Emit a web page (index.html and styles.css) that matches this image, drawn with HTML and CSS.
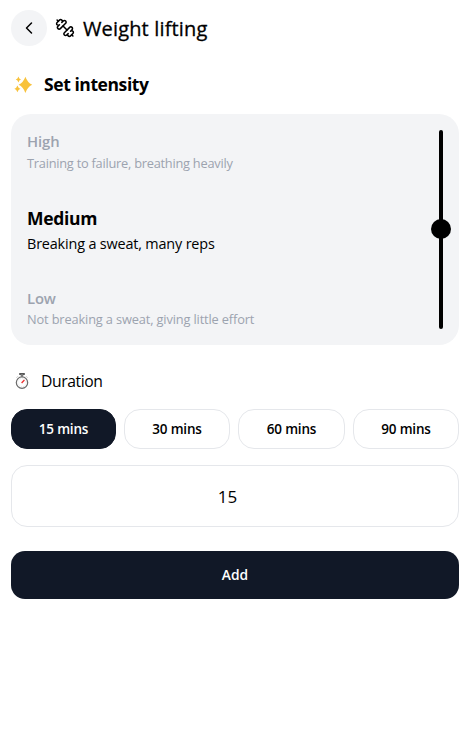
FILE: index.html
```html
<!DOCTYPE html>
<html lang="en">
<head>
<meta charset="utf-8">
<title>Weight lifting</title>
<link rel="stylesheet" href="styles.css">
</head>
<body>
<main class="page">
  <header class="header">
    <button class="back" aria-label="Back">
      <svg width="20" height="20" viewBox="0 0 24 24" fill="none" stroke="currentColor" stroke-width="1.8" stroke-linecap="round" stroke-linejoin="round"><path d="m15 18-6-6 6-6"/></svg>
    </button>
    <svg class="dumbbell" width="20" height="20" viewBox="0 0 24 24" fill="none" stroke="currentColor" stroke-width="1.8" stroke-linecap="round" stroke-linejoin="round"><path d="M14.4 14.4 9.6 9.6"/><path d="M18.657 21.485a2 2 0 1 1-2.829-2.828l-1.767 1.768a2 2 0 1 1-2.829-2.829l6.364-6.364a2 2 0 1 1 2.829 2.829l-1.768 1.767a2 2 0 1 1 2.828 2.829z"/><path d="m21.5 21.5-1.4-1.4"/><path d="M3.9 3.9 2.5 2.5"/><path d="M6.404 12.768a2 2 0 1 1-2.829-2.829l1.768-1.767a2 2 0 1 1-2.828-2.829l2.828-2.828a2 2 0 1 1 2.829 2.828l1.767-1.768a2 2 0 1 1 2.829 2.829z"/></svg>
    <h1 class="title">Weight lifting</h1>
  </header>

  <div class="section-head">
    <svg class="sparkles" width="20" height="20" viewBox="0 0 20 20" fill="#f8c23c"><path d="M12.4 1.8Q14.4 7.6 19.2 9.8Q14.4 12 12.4 18Q10.4 12 5.6 9.8Q10.4 7.6 12.4 1.8Z"/><path d="M5.4 1.6Q6 3.9 8 4.6Q6 5.3 5.4 7.6Q4.8 5.3 2.8 4.6Q4.8 3.9 5.4 1.6Z"/><path d="M4.4 10.4Q5.2 13 7.5 13.7Q5.2 14.4 4.4 17.2Q3.6 14.4 1.4 13.7Q3.6 13 4.4 10.4Z"/></svg>
    <h2 class="section-title">Set intensity</h2>
  </div>

  <section class="intensity">
    <div class="levels">
      <div class="level">
        <div class="name">High</div>
        <div class="desc">Training to failure, breathing heavily</div>
      </div>
      <div class="level level-active">
        <div class="name">Medium</div>
        <div class="desc">Breaking a sweat, many reps</div>
      </div>
      <div class="level level-low">
        <div class="name">Low</div>
        <div class="desc">Not breaking a sweat, giving little effort</div>
      </div>
    </div>
    <div class="slider"><div class="thumb"></div></div>
  </section>

  <div class="duration-head">
    <svg width="16" height="18" viewBox="0 0 16 18"><path d="M5.2 1h5.6v2H5.2z" fill="#555"/><path d="M7 2.5h2v2H7zM12.2 4.4l1.2 1.2M3.8 4.4 2.6 5.6" fill="#777" stroke="#888" stroke-width=".6"/><circle cx="8" cy="10.6" r="5.7" fill="#fff" stroke="#6b6b6b" stroke-width="1.2"/><circle cx="8" cy="10.6" r="4.2" fill="none" stroke="#bbb" stroke-width=".6" stroke-dasharray=".7 1.5"/><path d="m7.6 11 2.8-3" stroke="#ed3030" stroke-width="1.3"/></svg>
    <span class="duration-title">Duration</span>
  </div>

  <div class="presets">
    <button class="preset preset-active">15 mins</button>
    <button class="preset">30 mins</button>
    <button class="preset">60 mins</button>
    <button class="preset">90 mins</button>
  </div>
  <div class="minutes">15</div>
  <button class="add">Add</button>
</main>
</body>
</html>
```

FILE: styles.css
```css
* { box-sizing: border-box; }
body {
  margin: 0;
  background: #fff;
  color: #000;
  font-family: "Open Sans", "Noto Sans", sans-serif;
}
button { font-family: inherit; padding: 0; border: 0; }
svg { display: block; flex: none; }
h1, h2 { margin: 0; }
.page { padding: 10px 12px 0 11px; }
.header { display: flex; align-items: center; height: 36px; }
.back {
  display: flex; align-items: center; justify-content: center;
  width: 36px; height: 36px; border-radius: 50%;
  background: #f3f4f6; color: #000;
}
.dumbbell { margin-left: 8px; }
.title {
  margin-left: 8px; padding-top: 2px;
  font-size: 20px; font-weight: 500; line-height: 28px; letter-spacing: .15px;
  -webkit-text-stroke: .3px #000;
}
.section-head { display: flex; align-items: center; height: 28px; margin-top: 25px; padding-left: 2px; }
.section-title { margin-left: 11px; padding-bottom: 2px; font-size: 17.5px; font-weight: 700; line-height: 28px; letter-spacing: -.42px; }
.intensity {
  display: flex; justify-content: space-between;
  height: 231px; margin-top: 15px; padding: 16px;
  border-radius: 20px; background: #f3f4f6;
}
.levels { display: flex; flex-direction: column; margin-top: -1px; }
.level { color: #9ca3af; font-size: 12.8px; line-height: 20px; letter-spacing: -.24px; }
.name { font-size: 14.8px; font-weight: 600; line-height: 24px; letter-spacing: -.1px; }
.level-active { margin-top: 31px; color: #000; font-size: 14.4px; line-height: 22px; letter-spacing: -.16px; }
.level-active .name { font-size: 17.5px; font-weight: 700; line-height: 28px; letter-spacing: -.3px; }
.level-active .desc { padding-top: 1px; }
.level-low { margin-top: 31px; letter-spacing: -.14px; }
.level-low .desc { margin-top: -1px; }
.slider {
  display: flex; align-items: center; justify-content: center;
  width: 4px; padding-bottom: 2px; border-radius: 2px; background: #000;
}
.thumb { flex: none; width: 20px; height: 20px; border-radius: 50%; background: #000; }
.duration-head { display: flex; align-items: center; height: 24px; margin-top: 24px; padding-left: 3px; }
.duration-title { margin-left: 11px; font-size: 15.7px; line-height: 24px; letter-spacing: -.4px; }
.presets { display: grid; grid-template-columns: 105px 106px 107px 106px; gap: 8px; margin-top: 16px; }
.preset {
  height: 40px; border: 1px solid #e5e7eb; border-radius: 16px;
  background: #fff; color: #000; font-size: 13.5px; font-weight: 600; letter-spacing: -.2px;
}
.preset-active { border-color: #111827; background: #111827; color: #fff; }
.minutes {
  height: 62px; margin-top: 16px; padding: 1px 15px 0 0;
  border: 1px solid #e5e7eb; border-radius: 16px;
  font-size: 17px; line-height: 60px; text-align: center;
}
.add {
  display: block; width: 100%; height: 48px; margin-top: 24px; padding-bottom: 2px;
  border-radius: 14px; background: #111827; color: #fff;
  font-size: 13.8px; font-weight: 600;
}
```
